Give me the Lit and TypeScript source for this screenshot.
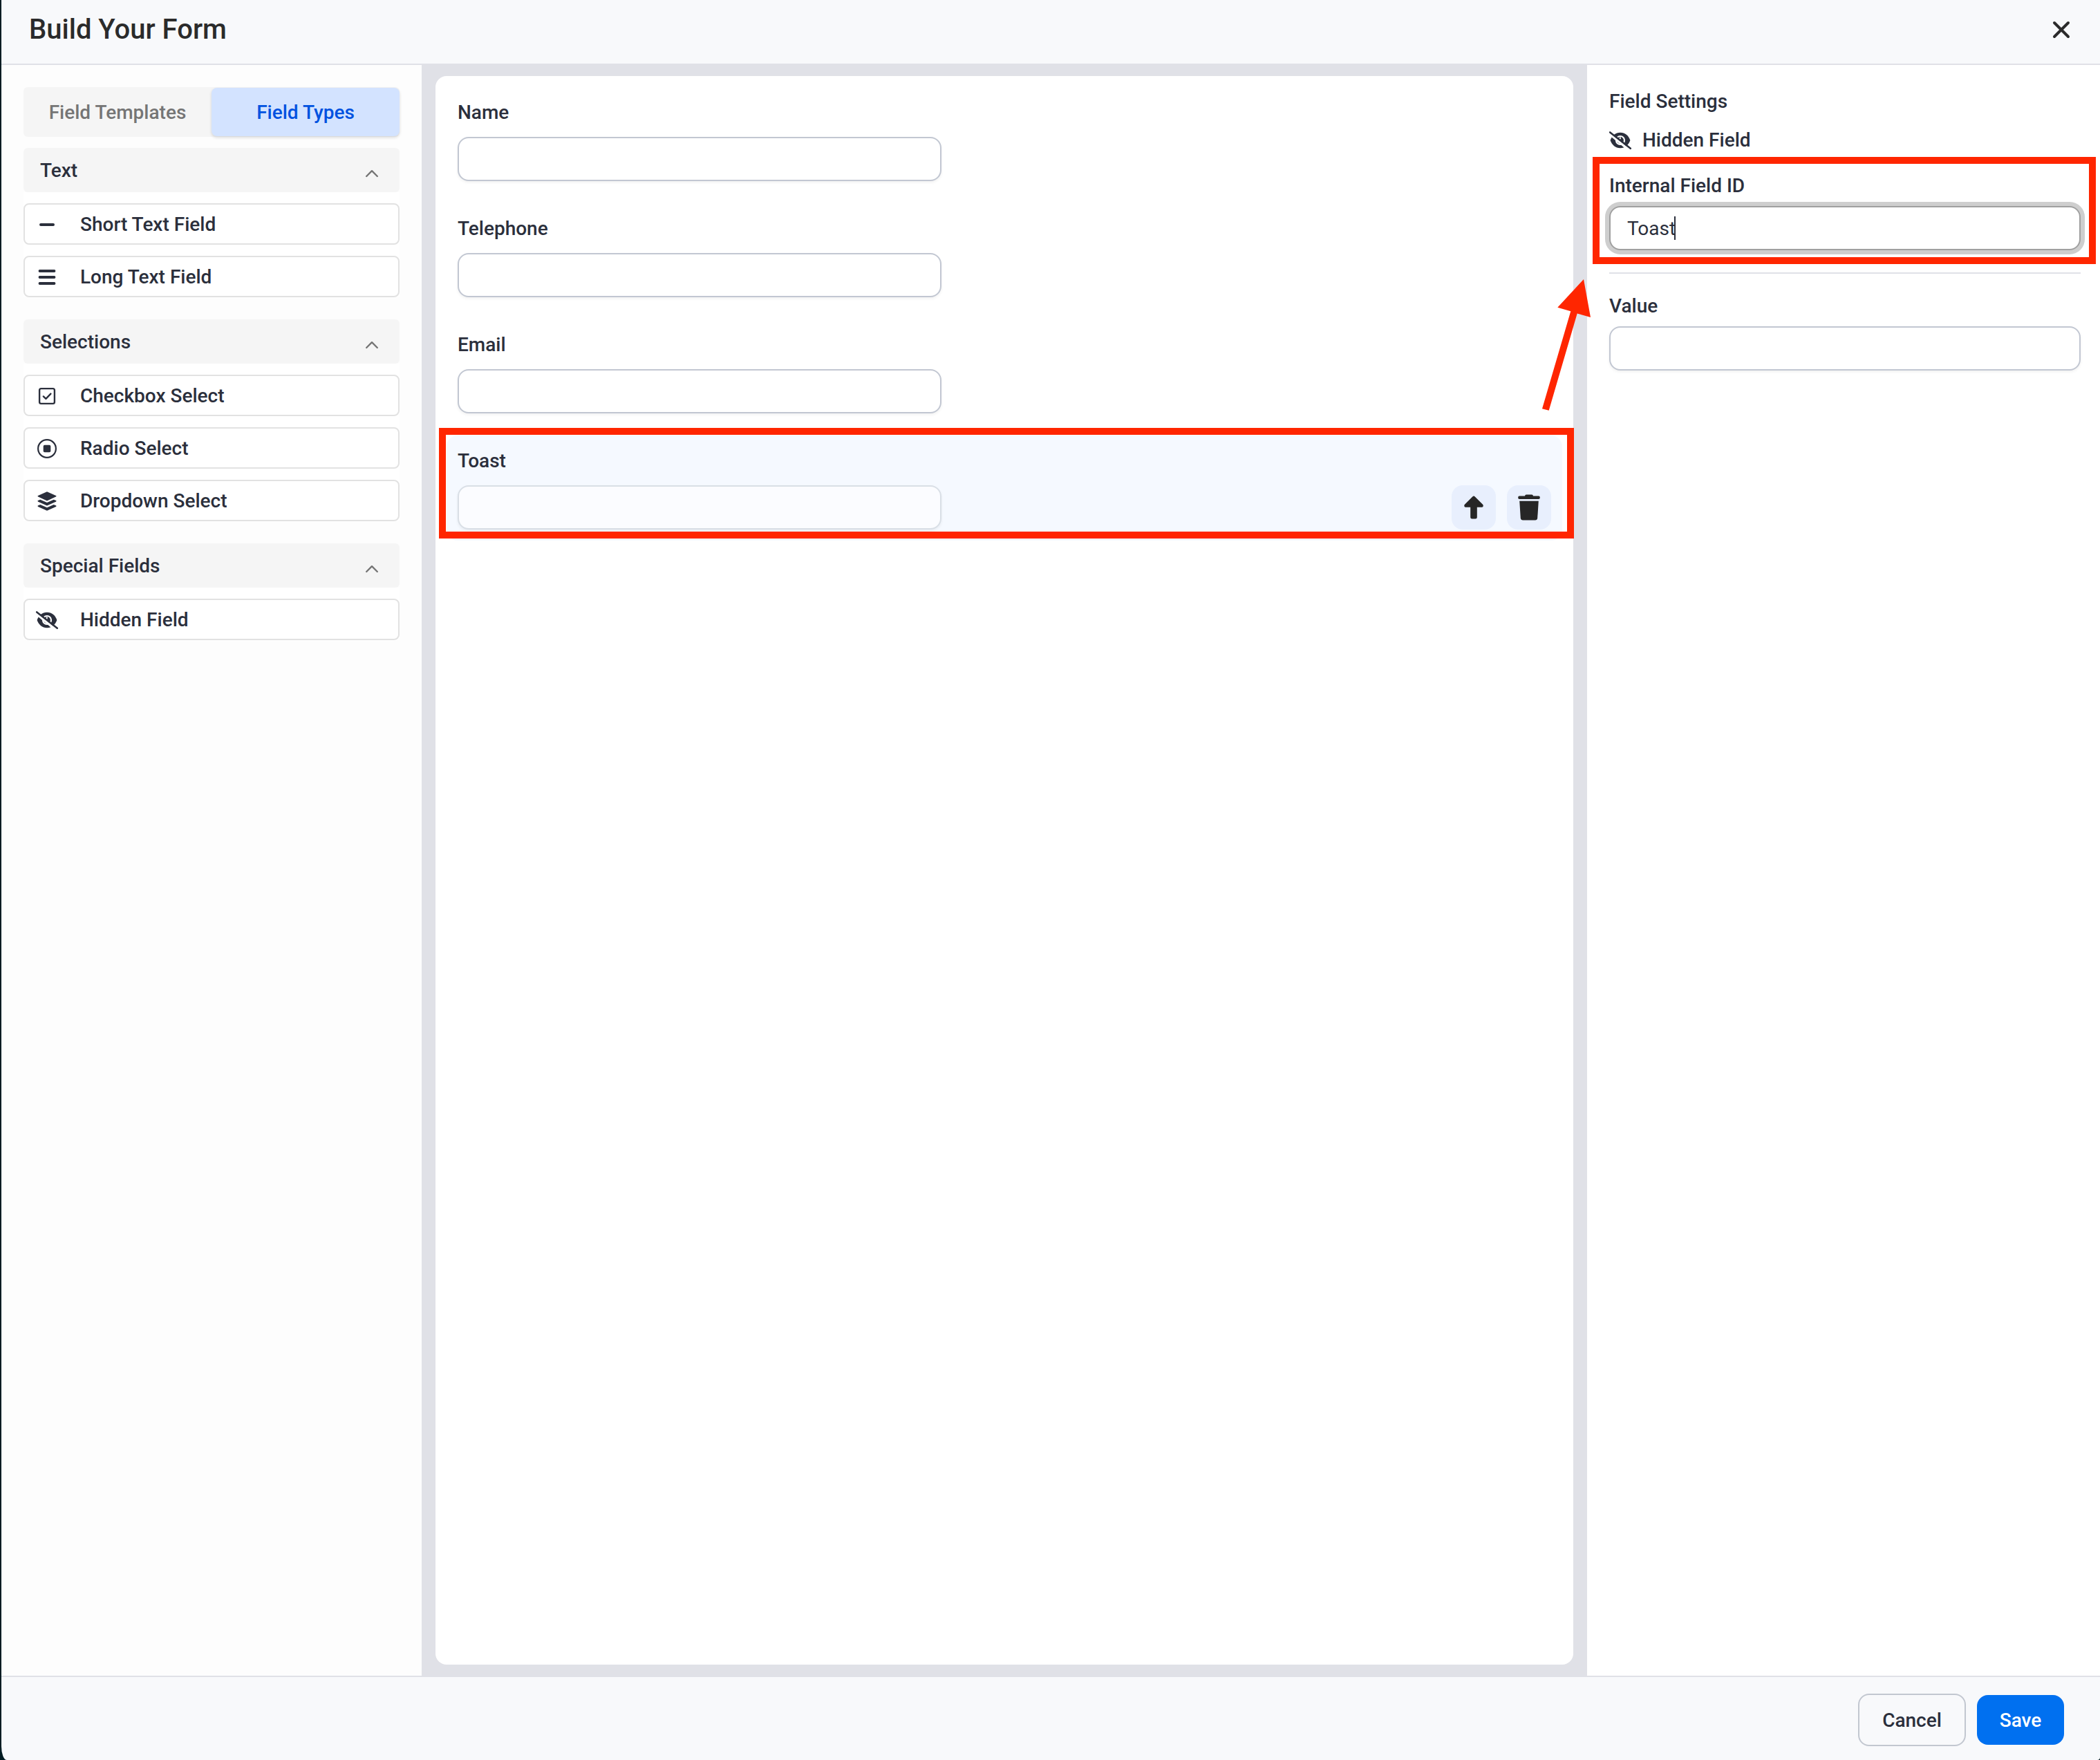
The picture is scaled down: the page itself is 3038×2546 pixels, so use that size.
import { LitElement, html, css, svg } from 'lit';
import { customElement, property, state } from 'lit/decorators.js';
import { classMap } from 'lit/directives/class-map.js';

type IconName =
  | 'minus'
  | 'lines'
  | 'checkbox'
  | 'radio'
  | 'layers'
  | 'hidden'
  | 'chevron'
  | 'close'
  | 'up'
  | 'trash';

const icons = {
  minus: {
    size: [22, 22],
    body: svg`<path d="M2 11h18" fill="none" stroke="currentColor" stroke-width="4" stroke-linecap="round" />`,
  },
  lines: {
    size: [24, 24],
    body: svg`<path d="M1.500 3h21M1.500 12h21M1.500 21h21" fill="none" stroke="currentColor" stroke-width="3.800" stroke-linecap="round" />`,
  },
  checkbox: {
    size: [24, 24],
    body: svg`<g fill="none" stroke="currentColor" stroke-width="2.4" stroke-linecap="round" stroke-linejoin="round">
      <rect x="1.1" y="1.1" width="21.8" height="21.8" rx="2.4" />
      <path d="M6.8 12.4l3.6 3.4 7-7.2" />
    </g>`,
  },
  radio: {
    size: [28, 28],
    body: svg`<circle cx="14" cy="14" r="12.9" fill="none" stroke="currentColor" stroke-width="2.2" />
      <rect x="8.7" y="8.7" width="10.6" height="10.6" rx="2" fill="currentColor" />`,
  },
  layers: {
    size: [28, 28],
    body: svg`<g fill="currentColor">
      <path d="M14 .2l12.9 5.7q1.6.8 0 1.6L14 13.4 1.1 7.5q-1.6-.8 0-1.6z" />
      <path d="M4.3 11.7L1.1 13.1q-1.6.8 0 1.6L14 20.6l12.900-5.900q1.600-.8 0-1.600l-3.200-1.400L14 16z" />
      <path d="M4.3 18.9L1.1 20.3q-1.6.8 0 1.6L14 27.8l12.900-5.900q1.600-.8 0-1.600l-3.200-1.400L14 23.200z" />
    </g>`,
  },
  hidden: {
    size: [32, 26],
    body: svg`<path fill="currentColor" d="M1.6 13C4.2 6 9 1.8 16 1.800S27.800 6 30.400 13C27.800 20 23 24.200 16 24.200S4.200 20 1.600 13z" />
      <circle cx="16" cy="13" r="6" fill="none" stroke="#fff" stroke-width="2.2" />
      <path d="M16 8.5c-.4 2.2 0 3.4-2.6 3.6" fill="none" stroke="#fff" stroke-width="2" />
      <path d="M-1 2.4L29 27.4" fill="none" stroke="#fff" stroke-width="3.4" />
      <path d="M1.2 1.4L30.8 24.8" fill="none" stroke="currentColor" stroke-width="2.6" stroke-linecap="round" />`,
  },
  chevron: {
    size: [20, 20],
    body: svg`<path d="M2.2 18L10 10.2 17.8 18" fill="none" stroke="currentColor" stroke-width="2.4" stroke-linecap="round" stroke-linejoin="round" />`,
  },
  close: {
    size: [24, 24],
    body: svg`<path d="M2 2l20 20M22 2L2 22" fill="none" stroke="currentColor" stroke-width="4" stroke-linecap="round" />`,
  },
  up: {
    size: [28, 34],
    body: svg`<path fill="currentColor" d="M12.5 1.2q1.5-1.4 3 0L27.3 13q1.4 2.8-1.3 3.7h-7.200V31q0 2.500-2.500 2.500h-4.600Q9.200 33.500 9.200 31V16.700H2Q-.7 15.800.7 13z" />`,
  },
  trash: {
    size: [32, 38],
    body: svg`<g fill="currentColor">
      <path d="M10 2.5Q10.2.6 12 .6h8q1.8 0 2 1.900h8q1.800 0 1.800 1.900v.9q0 1.700-1.800 1.700H2Q.2 7 .2 5.300v-.9q0-1.900 1.800-1.900z" />
      <path d="M2.2 9.7h27.6L28.2 34.2q-.3 3.200-3.400 3.200H7.200q-3.100 0-3.400-3.200z" />
    </g>`,
  },
};

const icon = (name: IconName) => {
  const [w, h] = icons[name].size;
  return html`<svg width=${w} height=${h} viewBox="0 0 ${w} ${h}" aria-hidden="true">
    ${icons[name].body}
  </svg>`;
};

const resets = css`
  * {
    box-sizing: border-box;
  }

  button,
  input {
    margin: 0;
    font: inherit;
    color: inherit;
  }

  button {
    padding: 0;
    border: none;
    background: none;
    cursor: pointer;
  }

  svg {
    display: block;
    flex: none;
    overflow: visible;
  }

  .text-input {
    display: block;
    width: 100%;
    height: 64px;
    padding: 0 24px;
    border: 2px solid #c2c7d2;
    border-radius: 16px;
    background: #fff;
    box-shadow: 0 2px 4px rgba(0, 0, 0, 0.06);
    outline: none;
  }
`;

@customElement('field-palette')
export class FieldPalette extends LitElement {
  @state()
  private tab: 'templates' | 'types' = 'types';

  private tabs = [
    { key: 'templates', label: 'Field Templates' },
    { key: 'types', label: 'Field Types' },
  ] as const;

  private groups: { title: string; items: { icon: IconName; label: string }[] }[] = [
    {
      title: 'Text',
      items: [
        { icon: 'minus', label: 'Short Text Field' },
        { icon: 'lines', label: 'Long Text Field' },
      ],
    },
    {
      title: 'Selections',
      items: [
        { icon: 'checkbox', label: 'Checkbox Select' },
        { icon: 'radio', label: 'Radio Select' },
        { icon: 'layers', label: 'Dropdown Select' },
      ],
    },
    {
      title: 'Special Fields',
      items: [{ icon: 'hidden', label: 'Hidden Field' }],
    },
  ];

  render() {
    return html`
      <div class="tabs" role="tablist">
        ${this.tabs.map(
          (tab) => html`
            <button
              role="tab"
              aria-selected=${this.tab === tab.key}
              class=${classMap({ tab: true, active: this.tab === tab.key })}
              @click=${() => (this.tab = tab.key)}
            >
              ${tab.label}
            </button>
          `,
        )}
      </div>
      <div class="groups">
        ${this.groups.map(
          (group) => html`
            <section>
              <button class="group-title" aria-expanded="true">
                ${group.title} ${icon('chevron')}
              </button>
              <div class="items">
                ${group.items.map(
                  (item) => html`
                    <button class="item">
                      <span class="item-icon">${icon(item.icon)}</span>
                      ${item.label}
                    </button>
                  `,
                )}
              </div>
            </section>
          `,
        )}
      </div>
    `;
  }

  static styles = [
    resets,
    css`
      :host {
        display: flex;
        flex-direction: column;
        gap: 16px;
        padding: 32px;
        background: #fdfdfd;
      }

      .tabs {
        display: grid;
        grid-template-columns: 1fr 1fr;
        height: 72px;
        padding: 1px 0;
        border-radius: 6px;
        background: #f5f5f5;
      }

      .tab {
        padding-top: 2px;
        border-radius: 8px;
        color: #757575;
      }

      .tab.active {
        background: #d3e3ff;
        color: #0052e0;
        box-shadow: 0 2px 4px rgba(0, 0, 0, 0.14);
      }

      .groups {
        display: flex;
        flex-direction: column;
        gap: 32px;
      }

      .group-title {
        display: flex;
        align-items: center;
        justify-content: space-between;
        width: 100%;
        height: 64px;
        padding: 2px 30px 0 24px;
        border-radius: 6px;
        background: #f5f5f5;
      }

      .group-title svg {
        color: #757575;
      }

      .items {
        display: flex;
        flex-direction: column;
        gap: 16px;
        padding-top: 16px;
        background: #fff;
      }

      .item {
        display: flex;
        align-items: center;
        gap: 32px;
        height: 60px;
        padding: 1px 16px 0;
        border: 2px solid #e2e2e2;
        border-radius: 8px;
        background: #fff;
      }

      .item-icon {
        display: flex;
        justify-content: center;
        width: 32px;
      }
    `,
  ];
}

@customElement('form-canvas')
export class FormCanvas extends LitElement {
  @property({ type: String })
  selected = 'toast';

  private fields = [
    { id: 'name', label: 'Name' },
    { id: 'telephone', label: 'Telephone' },
    { id: 'email', label: 'Email' },
    { id: 'toast', label: 'Toast' },
  ];

  render() {
    return html`
      <div class="sheet">
        ${this.fields.map((field) => {
          const selected = field.id === this.selected;
          return html`
            <div class=${classMap({ field: true, selected })}>
              <label for=${field.id}>${field.label}</label>
              <div class="row">
                <input class="text-input" id=${field.id} type="text" ?disabled=${selected} />
                ${selected
                  ? html`
                      <div class="actions">
                        <button aria-label="Move up">${icon('up')}</button>
                        <button aria-label="Delete">${icon('trash')}</button>
                      </div>
                    `
                  : ''}
              </div>
              ${selected ? html`<div class="callout"></div>` : ''}
            </div>
          `;
        })}
      </div>
    `;
  }

  static styles = [
    resets,
    css`
      :host {
        display: flex;
        padding: 16px 20px;
        background: #e0e1e7;
      }

      .sheet {
        flex: 1;
        display: flex;
        flex-direction: column;
        gap: 16px;
        padding: 16px;
        border-radius: 16px;
        background: #fff;
      }

      .field {
        position: relative;
        display: flex;
        flex-direction: column;
        gap: 14px;
        padding: 16px;
        border-radius: 16px;
      }

      .field.selected {
        background: #f5f9ff;
      }

      .row {
        display: flex;
        align-items: center;
        justify-content: space-between;
        gap: 16px;
      }

      .text-input {
        max-width: 700px;
      }

      .text-input:disabled {
        border-color: #d9dfe6;
        background: #fbfcff;
      }

      .actions {
        display: flex;
        gap: 16px;
      }

      .actions button {
        display: grid;
        place-items: center;
        width: 64px;
        height: 64px;
        border-radius: 16px;
        background: #e8effd;
        color: #262626;
      }

      .callout {
        position: absolute;
        inset: -11px -17px 3px -11px;
        border: 10px solid #ff2600;
        pointer-events: none;
      }
    `,
  ];
}

@customElement('field-settings')
export class FieldSettings extends LitElement {
  @property({ type: String })
  fieldId = 'Toast';

  render() {
    return html`
      <h2>Field Settings</h2>
      <div class="kind">${icon('hidden')} Hidden Field</div>
      <div class="setting">
        <label for="field-id">Internal Field ID</label>
        <div class="focused">
          <input class="text-input" id="field-id" type="text" .value=${this.fieldId} />
          <span class="caret"></span>
        </div>
        <div class="callout"></div>
        <svg class="arrow" width="72" height="192" viewBox="2230 403 72 192" aria-hidden="true">
          <path
            fill="#ff2600"
            d="M2291 404L2301 459L2281.7 453.5L2240.7 593.7L2231 591.3L2272.3 450.3L2253.3 444.7z"
          />
        </svg>
      </div>
      <hr />
      <div class="setting">
        <label for="field-value">Value</label>
        <input class="text-input" id="field-value" type="text" />
      </div>
    `;
  }

  static styles = [
    resets,
    css`
      :host {
        display: block;
        padding: 32px 28px 32px 32px;
        background: #fff;
      }

      h2 {
        margin: 0 0 14px;
        font: inherit;
      }

      .kind {
        display: flex;
        align-items: center;
        gap: 16px;
      }

      .setting {
        position: relative;
        display: flex;
        flex-direction: column;
        gap: 8px;
        padding-top: 24px;
      }

      .focused {
        position: relative;
      }

      .focused .text-input {
        border-color: #a0a0a0;
        box-shadow: 0 0 0 6px #cecece;
        font-weight: 400;
        caret-color: transparent;
      }

      .caret {
        position: absolute;
        top: 15px;
        left: 94px;
        width: 2px;
        height: 34px;
        background: #2b2f3c;
      }

      hr {
        height: 2px;
        margin: 32px 0 2px;
        border: none;
        background: #e0e1e7;
      }

      .callout {
        position: absolute;
        inset: 3px -22px -20px -24px;
        border: 10px solid #ff2600;
        pointer-events: none;
      }

      .arrow {
        position: absolute;
        top: 179px;
        left: -98px;
        pointer-events: none;
      }
    `,
  ];
}

@customElement('app-root')
export class AppRoot extends LitElement {
  render() {
    return html`
      <div class="dialog" role="dialog" aria-labelledby="title">
        <header>
          <h1 id="title">Build Your Form</h1>
          <button class="close" aria-label="Close">${icon('close')}</button>
        </header>
        <main>
          <field-palette></field-palette>
          <form-canvas></form-canvas>
          <field-settings></field-settings>
        </main>
        <footer>
          <button class="cancel">Cancel</button>
          <button class="save">Save</button>
        </footer>
      </div>
    `;
  }

  static styles = [
    resets,
    css`
      :host {
        display: flex;
        min-height: 100vh;
        padding-left: 2px;
        box-sizing: border-box;
        background: #021c22;
        color: #2b2f3c;
        font: 500 28px/42px Roboto, 'Liberation Sans', sans-serif;
      }

      .dialog {
        flex: 1;
        display: flex;
        flex-direction: column;
        border-radius: 0 0 4px 8px / 0 0 4px 20px;
        background: #f8f9fb;
      }

      header {
        display: flex;
        align-items: center;
        justify-content: space-between;
        padding: 16px 44px 22px 40px;
        border-bottom: 2px solid #e0e1e7;
      }

      h1 {
        margin: 0;
        color: #2b2b2b;
        font-size: 40px;
        font-weight: 500;
        line-height: 54px;
      }

      .close {
        color: #2b2b2b;
      }

      main {
        flex: 1;
        display: grid;
        grid-template-columns: 608px 1fr 742px;
      }

      field-settings {
        position: relative;
      }

      footer {
        display: flex;
        align-items: center;
        justify-content: flex-end;
        gap: 16px;
        padding: 24px 52px 20px;
        border-top: 2px solid #e0e1e7;
      }

      .cancel {
        min-width: 156px;
        height: 76px;
        padding: 2px 24px 0;
        border: 2px solid #c2c7d0;
        border-radius: 16px;
      }

      .save {
        min-width: 126px;
        height: 72px;
        padding: 2px 24px 0;
        border-radius: 16px;
        background: #0070f0;
        color: #fff;
      }
    `,
  ];
}

declare global {
  interface HTMLElementTagNameMap {
    'app-root': AppRoot;
    'field-palette': FieldPalette;
    'form-canvas': FormCanvas;
    'field-settings': FieldSettings;
  }
}
